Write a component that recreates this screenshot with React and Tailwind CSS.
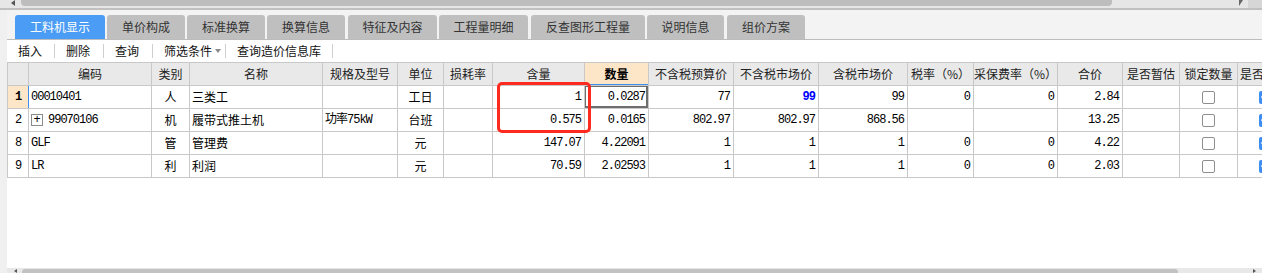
import { Check } from 'lucide-react'

const cjk = "font-['Microsoft_YaHei','Noto_Sans_CJK_SC',sans-serif]"
const mono = "font-['Liberation_Mono','Noto_Sans_CJK_SC',monospace] tracking-[-1px]"

const tabs = [
  { label: '工料机显示', cls: 'ml-0 w-[90px]', active: true },
  { label: '单价构成', cls: 'ml-[2px] w-[78px]' },
  { label: '标准换算', cls: 'ml-[2px] w-[78px]' },
  { label: '换算信息', cls: 'ml-[2px] w-[78px]' },
  { label: '特征及内容', cls: 'ml-[3px] w-[89px]' },
  { label: '工程量明细', cls: 'ml-[2px] w-[89px]' },
  { label: '反查图形工程量', cls: 'ml-[3px] w-[114px]' },
  { label: '说明信息', cls: 'ml-[2px] w-[77px]' },
  { label: '组价方案', cls: 'ml-[3px] w-[78px]' },
]

const cols = [
  { w: 'w-[21px]', label: '', align: 'justify-center' },
  { w: 'w-[123px]', label: '编码', align: 'justify-start pl-[2px]' },
  { w: 'w-[38px]', label: '类别', align: 'justify-center' },
  { w: 'w-[133px]', label: '名称', align: 'justify-start pl-[2px]' },
  { w: 'w-[75px]', label: '规格及型号', align: 'justify-start pl-[2px]' },
  { w: 'w-[46px]', label: '单位', align: 'justify-center' },
  { w: 'w-[49px]', label: '损耗率', align: 'justify-end pr-[3px]' },
  { w: 'w-[92px]', label: '含量', align: 'justify-end pr-[3px]' },
  { w: 'w-[64px]', label: '数量', align: 'justify-end pr-[3px]' },
  { w: 'w-[85px]', label: '不含税预算价', align: 'justify-end pr-[3px]' },
  { w: 'w-[85px]', label: '不含税市场价', align: 'justify-end pr-[3px]' },
  { w: 'w-[89px]', label: '含税市场价', align: 'justify-end pr-[3px]' },
  { w: 'w-[66px]', label: '税率（%）', align: 'justify-end pr-[3px]' },
  { w: 'w-[84px]', label: '采保费率（%）', align: 'justify-end pr-[3px]' },
  { w: 'w-[65px]', label: '合价', align: 'justify-end pr-[3px]' },
  { w: 'w-[57px]', label: '是否暂估', align: 'justify-center' },
  { w: 'w-[58px]', label: '锁定数量', align: 'justify-center' },
  { w: 'w-[55px]', label: '是否计价', align: 'justify-center' },
]

const rows = [
  ['1', '00010401', '人', '三类工', '', '工日', '', '1', '0.0287', '77', '99', '99', '0', '0', '2.84'],
  ['2', '99070106', '机', '履带式推土机', '功率75kW', '台班', '', '0.575', '0.0165', '802.97', '802.97', '868.56', '', '', '13.25'],
  ['8', 'GLF', '管', '管理费', '', '元', '', '147.07', '4.22091', '1', '1', '1', '0', '0', '4.22'],
  ['9', 'LR', '利', '利润', '', '元', '', '70.59', '2.02593', '1', '1', '1', '0', '0', '2.03'],
]

const cjkCols = [2, 3, 5]

function Tri({ className }) {
  return (
    <svg width="6" height="4" viewBox="0 0 6 4" className={className}>
      <path d="M0 0 L6 0 L3 4 Z" fill="#8a8a8a" />
    </svg>
  )
}

function Row({ data, first }) {
  return (
    <div className="flex h-[23px] border-b border-[#c8c8c8]">
      {cols.map((c, i) => {
        let content = data[i] ?? ''
        let extra = ''
        if (i === 0) {
          extra = first ? 'bg-[#fde5c7] border-r-[#3d8ef0] font-bold' : ''
        }
        if (i === 1 && data[0] === '2') {
          content = (
            <>
              <span className="flex h-[12px] w-[12px] items-center justify-center border border-[#8c8c8c] text-[12px] leading-none tracking-normal">+</span>
              <span className="ml-[5px]">{data[i]}</span>
            </>
          )
        }
        if (i === 16) {
          content = <span className="block h-[13px] w-[13px] rounded-[2px] border border-[#8e8e8e] bg-white" />
        }
        if (i === 17) {
          content = (
            <span className="flex h-[13px] w-[13px] items-center justify-center rounded-[2px] bg-[#3d8ef0]">
              <Check size={10} strokeWidth={3} color="white" />
            </span>
          )
        }
        const isCjk = cjkCols.includes(i)
        return (
          <div
            key={i}
            className={`relative flex h-full shrink-0 items-center overflow-hidden whitespace-nowrap border-r border-[#c8c8c8] ${c.w} ${c.align} ${extra} ${isCjk ? `${cjk} text-[12px]` : `${mono} text-[12px]`}`}
          >
            {i === 10 && first ? <span className="font-bold text-[#0000ff]">{content}</span> : content}
            {i === 8 && first && (
              <div className="pointer-events-none absolute -left-px -top-px bottom-0 right-0 border-2 border-[#6e6e6e]" />
            )}
          </div>
        )
      })}
    </div>
  )
}

export default function App() {
  return (
    <div className="relative flex h-[273px] w-[1262px] flex-col overflow-hidden bg-white text-black">
      {/* top scrollbar */}
      <div className="flex h-[8px] shrink-0 items-start bg-[#e6e6e6]">
        <svg width="4" height="6" viewBox="0 0 4 6" className="ml-[11px] mt-0">
          <path d="M4 0 L4 6 L0 3 Z" fill="#555" />
        </svg>
        <div className="ml-[6px] h-[6px] w-[1091px] rounded-b-[4px] bg-[#bdbdbd]" />
        <svg width="4" height="6" viewBox="0 0 4 6" className="ml-[127px]">
          <path d="M0 0 L4 0 L0 6 Z" fill="#666" />
        </svg>
        <div className="ml-[5px] h-full flex-1 bg-[#d6d6d6]" />
      </div>
      <div className="h-[2px] shrink-0 bg-[#c0c0c0]" />

      <div className="flex min-h-0 flex-1">
        <div className="w-[7px] shrink-0 bg-[#f0f0f0]" />
        <div className="flex min-w-0 flex-1 flex-col overflow-hidden">
          {/* tabs */}
          <div className={`flex h-[30px] shrink-0 items-end border-b border-[#bcbcbc] bg-[#f3f3f3] pl-[8px] ${cjk}`}>
            {tabs.map((t) => (
              <div
                key={t.label}
                className={`flex h-[24px] shrink-0 items-center justify-center rounded-t-[3px] text-[12px] ${t.cls} ${
                  t.active ? 'bg-[#4a9cf5] text-white' : 'bg-[#bfbfbf] text-[#333]'
                }`}
              >
                {t.label}
              </div>
            ))}
          </div>

          {/* toolbar */}
          <div className={`flex h-[22px] shrink-0 items-center bg-white text-[12px] text-[#111] ${cjk}`}>
            <span className="pl-[11px] pr-[12px]">插入</span>
            <span className="h-[14px] w-px bg-[#cfcfcf]" />
            <span className="px-[11px]">删除</span>
            <span className="ml-[2px] h-[14px] w-px bg-[#cfcfcf]" />
            <span className="px-[11px]">查询</span>
            <span className="ml-[2px] h-[14px] w-px bg-[#cfcfcf]" />
            <span className="flex items-center pl-[11px] pr-[4px]">
              筛选条件
              <Tri className="ml-[3px]" />
            </span>
            <span className="h-[14px] w-px bg-[#cfcfcf]" />
            <span className="px-[11px]">查询造价信息库</span>
            <span className="h-[14px] w-px bg-[#cfcfcf]" />
          </div>

          {/* grid */}
          <div className="shrink-0 border-l border-t border-[#c8c8c8]">
            <div className={`flex h-[23px] border-b border-[#c8c8c8] bg-[#e9e9e9] text-[12px] text-[#222] ${cjk}`}>
              {cols.map((c, i) => (
                <div
                  key={i}
                  className={`relative flex h-full shrink-0 items-center overflow-hidden whitespace-nowrap border-r border-[#c8c8c8] ${c.w} ${
                    i === 17 ? 'justify-start pl-[2px]' : 'justify-center'
                  } ${i === 8 ? 'bg-[#fde5c7] font-bold text-black' : ''}`}
                >
                  {c.label}
                  {i === 8 && <div className="absolute -bottom-px -left-px right-0 h-[2px] bg-[#3d8ef0]" />}
                </div>
              ))}
            </div>
            {rows.map((r, idx) => (
              <Row key={r[0]} data={r} first={idx === 0} />
            ))}
          </div>

          <div className="flex-1 bg-white" />

          {/* bottom scrollbar */}
          <div className="flex h-[5px] shrink-0 items-end bg-[#e8e8e8]">
            <svg width="3" height="4" viewBox="0 0 3 4" className="ml-[7px]">
              <path d="M3 0 L3 4 L0 2 Z" fill="#555" />
            </svg>
            <div className="ml-[5px] h-[4px] w-[1156px] rounded-t-[3px] bg-[#c2c2c2]" />
            <svg width="3" height="4" viewBox="0 0 3 4" className="ml-[75px]">
              <path d="M0 0 L3 2 L0 4 Z" fill="#555" />
            </svg>
          </div>
        </div>
      </div>

      {/* red annotation box */}
      <div className="pointer-events-none absolute left-[497px] top-[82px] h-[51px] w-[94px] rounded-[5px] border-[3px] border-[#ff2a1f]" />
    </div>
  )
}
